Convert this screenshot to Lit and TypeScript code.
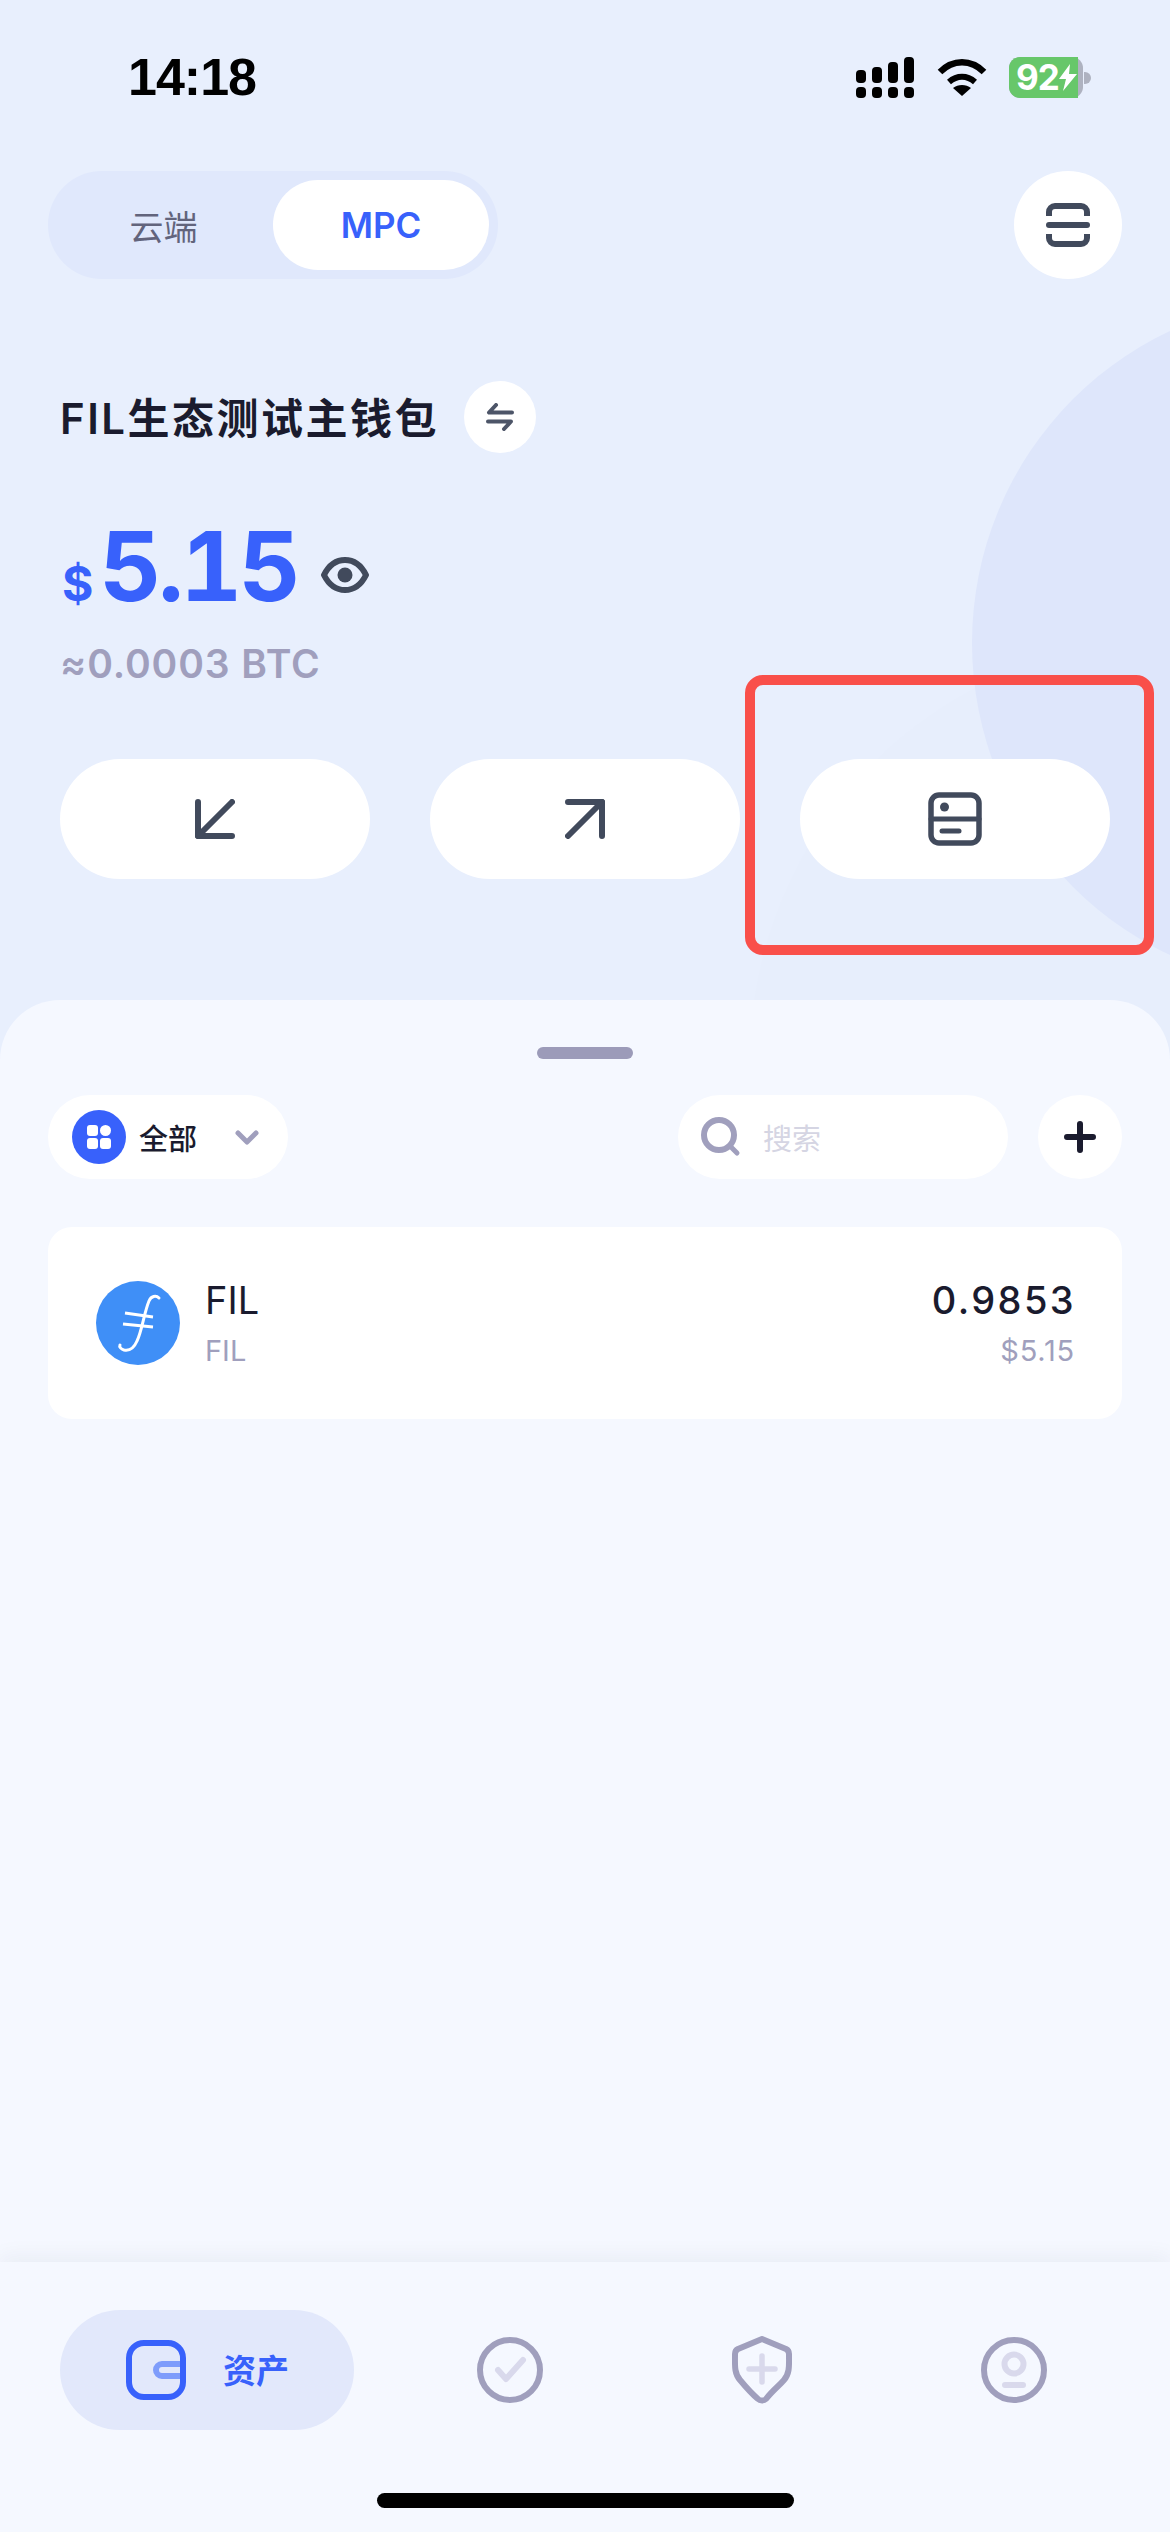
import { LitElement, html, css } from 'lit';
import { customElement } from 'lit/decorators.js';

@customElement('app-root')
export class AppRoot extends LitElement {
  static styles = css`
    :host {
      display: block;
      width: 1170px;
      height: 2532px;
      font-family: 'Inter', 'Noto Sans CJK SC', sans-serif;
      color: #1a1b2e;
    }
    svg { display: block; fill: none; stroke-linecap: round; stroke-linejoin: round; }
    .page {
      position: relative;
      display: flex;
      flex-direction: column;
      height: 2532px;
      overflow: hidden;
      background: #e8effd;
    }
    .deco-big, .deco-soft {
      position: absolute;
      border-radius: 50%;
    }
    .deco-soft { left: 750px; top: 640px; width: 840px; height: 840px; background: #e7eefc; }
    .deco-big { left: 972px; top: 298px; width: 690px; height: 690px; background: #dee6fb; }
    .deco-clip { position: absolute; inset: 0; overflow: hidden; }

    .status {
      position: relative;
      display: flex;
      justify-content: space-between;
      height: 171px;
      padding: 57px 79px 0 128px;
      box-sizing: border-box;
    }
    .time {
      font-family: 'Liberation Sans', sans-serif;
      font-weight: 700;
      font-size: 52px;
      line-height: 41px;
      letter-spacing: -1px;
      color: #000;
      height: 41px;
    }
    .sys { display: flex; align-items: flex-start; }
    .wifi { margin: 2px 22px 0 23px; }
    .battery {
      position: relative;
      width: 74px;
      height: 41px;
      border-radius: 11px;
      background: #aeb2c0;
    }
    .battery-fill {
      display: flex;
      align-items: center;
      height: 100%;
      padding-left: 7px;
      box-sizing: border-box;
      border-radius: 11px 0 0 11px;
      background: #67c76a;
      color: #fff;
      font-weight: 700;
      font-size: 35px;
      line-height: 41px;
      letter-spacing: -1px;
    }
    .battery-tip {
      width: 7px;
      height: 12px;
      margin: 15px 0 0 1px;
      border-radius: 0 6px 6px 0;
      background: #aeb2c0;
    }

    .top {
      position: relative;
      display: flex;
      justify-content: space-between;
      padding: 0 48px;
    }
    .toggle {
      display: flex;
      align-items: center;
      width: 450px;
      height: 108px;
      padding: 0 9px 0 0;
      box-sizing: border-box;
      border-radius: 54px;
      background: #e0e8fc;
    }
    .toggle-off {
      width: 225px;
      padding-left: 6px;
      box-sizing: border-box;
      text-align: center;
      font-size: 34px;
      color: #62647c;
    }
    .toggle-on {
      width: 216px;
      height: 90px;
      border-radius: 45px;
      background: #fff;
      color: #3861fb;
      font-size: 35px;
      font-weight: 600;
      line-height: 90px;
      text-align: center;
    }
    .round {
      display: flex;
      align-items: center;
      justify-content: center;
      border-radius: 50%;
      background: #fff;
    }
    .scan { width: 108px; height: 108px; }

    .wallet {
      position: relative;
      display: flex;
      align-items: center;
      margin-top: 102px;
      padding-left: 60px;
      height: 72px;
    }
    .wallet-name {
      font-size: 42px;
      font-weight: 600;
      letter-spacing: 2.5px;
      line-height: 72px;
      position: relative;
      top: 2px;
    }
    .swap { width: 72px; height: 72px; margin-left: 25px; }

    .balance {
      position: relative;
      display: flex;
      align-items: center;
      margin-top: 74px;
      padding-left: 62px;
      height: 96px;
    }
    .amount {
      display: flex;
      align-items: baseline;
      color: #3861fb;
      font-weight: 700;
      font-variant-numeric: tabular-nums;
    }
    .cur { font-size: 48px; line-height: 96px; }
    .num { font-size: 96px; line-height: 96px; margin-left: 6px; letter-spacing: -3.5px; }
    .eye { margin: 0 0 0 24px; }
    .btc {
      position: relative;
      margin-top: 14px;
      padding-left: 60px;
      font-size: 39px;
      font-weight: 600;
      line-height: 54px;
      color: #a09fbd;
      letter-spacing: 0.9px;
    }

    .actions {
      position: relative;
      display: flex;
      gap: 60px;
      margin-top: 68px;
      padding: 0 60px;
    }
    .action {
      display: flex;
      align-items: center;
      justify-content: center;
      flex: 1;
      height: 120px;
      border-radius: 60px;
      background: #fff;
    }

    .mark {
      position: absolute;
      left: 745px;
      top: 675px;
      width: 409px;
      height: 280px;
      box-sizing: border-box;
      border: 10px solid #f94f4a;
      border-radius: 18px;
      z-index: 2;
    }

    .sheet {
      position: relative;
      display: flex;
      flex-direction: column;
      flex: 1;
      margin-top: 121px;
      border-radius: 60px 60px 0 0;
      background: #f5f8ff;
    }
    .grabber {
      align-self: center;
      width: 96px;
      height: 12px;
      margin-top: 47px;
      border-radius: 6px;
      background: #9c9bb9;
    }
    .filters {
      display: flex;
      align-items: center;
      margin-top: 36px;
      padding: 0 48px;
    }
    .pill {
      display: flex;
      align-items: center;
      height: 84px;
      border-radius: 42px;
      background: #fff;
    }
    .pill-all { width: 240px; padding-left: 24px; box-sizing: border-box; }
    .pill-all span { margin-left: 13px; font-size: 29px; font-weight: 500; width: 58px; }
    .chev { margin-left: 38px; }
    .pill-search { width: 330px; margin-left: auto; padding-left: 23px; box-sizing: border-box; }
    .pill-search span { margin-left: 22px; font-size: 29px; color: #d5d5e3; }
    .plus { width: 84px; height: 84px; margin-left: 30px; }

    .card {
      display: flex;
      align-items: center;
      height: 192px;
      margin: 48px 48px 0;
      padding: 0 48px;
      border-radius: 24px;
      background: #fff;
    }
    .coin { width: 84px; height: 84px; border-radius: 50%; background: #3f8ff7; flex: none; }
    .coin-text { margin-left: 25px; }
    .coin-values { margin-left: auto; text-align: right; }
    .main { font-size: 38px; line-height: 46px; }
    .main.val { font-weight: 500; letter-spacing: 2.4px; margin-right: -2px; }
    .sub { margin-top: 10px; font-size: 29px; line-height: 36px; color: #a09fbd; }
    .coin-values .sub { letter-spacing: 0.8px; margin-right: -1px; }

    .tabs {
      display: flex;
      align-items: flex-start;
      height: 270px;
      margin-top: auto;
      padding: 48px 0 0 60px;
      box-sizing: border-box;
      background: #f5f8ff;
      box-shadow: 0 -6px 20px rgba(20, 30, 60, 0.05);
    }
    .tab-on {
      display: flex;
      align-items: center;
      width: 294px;
      height: 120px;
      margin-right: 30px;
      padding-left: 66px;
      box-sizing: border-box;
      border-radius: 60px;
      background: #e2e8fb;
    }
    .tab-on span {
      margin-left: 37px;
      font-size: 33px;
      font-weight: 600;
      color: #3861fb;
      position: relative;
      top: -1px;
    }
    .tab {
      display: flex;
      align-items: center;
      justify-content: center;
      width: 252px;
      height: 120px;
    }
    .home {
      position: absolute;
      left: 377px;
      top: 1493px;
      width: 417px;
      height: 15px;
      border-radius: 8px;
      background: #000;
    }
  `;

  render() {
    return html`
      <div class="page">
        <div class="deco-clip">
          <div class="deco-soft"></div>
          <div class="deco-big"></div>
        </div>

        <div class="status">
          <div class="time">14:18</div>
          <div class="sys">
            <svg width="58" height="41" viewBox="0 0 58 41" style="fill:#000">
              <rect x="0" y="13" width="10" height="13" rx="4"></rect>
              <rect x="16" y="10" width="10" height="16" rx="4"></rect>
              <rect x="32" y="5" width="10" height="21" rx="4"></rect>
              <rect x="48" y="0" width="10" height="26" rx="4"></rect>
              <rect x="0" y="30" width="10" height="11" rx="4"></rect>
              <rect x="16" y="30" width="10" height="11" rx="4"></rect>
              <rect x="32" y="30" width="10" height="11" rx="4"></rect>
              <rect x="48" y="30" width="10" height="11" rx="4"></rect>
            </svg>
            <svg class="wifi" width="50" height="37" viewBox="0 0 50 37">
              <path d="M3 13C16 0 34 0 47 13" stroke="#000" stroke-width="6.5" stroke-linecap="butt"></path>
              <path d="M12 23C20 16 30 16 38 23" stroke="#000" stroke-width="6" stroke-linecap="butt"></path>
              <path d="M25 37L16 29C21 25 29 25 34 29Z" fill="#000"></path>
            </svg>
            <div class="battery">
              <div class="battery-fill" style="width:${92 * 0.75}px">
                92<svg width="18" height="27" viewBox="0 0 18 27" style="fill:#fff;flex:none">
                  <path d="M11 0L0 15H7L4 27L18 10H10Z"></path>
                </svg>
              </div>
            </div>
            <div class="battery-tip"></div>
          </div>
        </div>

        <div class="top">
          <div class="toggle">
            <div class="toggle-off">云端</div>
            <div class="toggle-on">MPC</div>
          </div>
          <div class="round scan">
            <svg width="44" height="44" viewBox="0 0 44 44" stroke="#414a5c" stroke-width="6">
              <path d="M3 13V9a6 6 0 0 1 6-6H35a6 6 0 0 1 6 6V13" stroke-linecap="butt"></path>
              <path d="M3 22H41"></path>
              <path d="M3 31V35a6 6 0 0 0 6 6H35a6 6 0 0 0 6-6V31" stroke-linecap="butt"></path>
            </svg>
          </div>
        </div>

        <div class="wallet">
          <div class="wallet-name">FIL生态测试主钱包</div>
          <div class="round swap">
            <svg width="28" height="28" viewBox="0 0 28 28" stroke="#4d5568" stroke-width="4">
              <path d="M10 2L3 9.5H26"></path>
              <path d="M2 18.5H25L18 26"></path>
            </svg>
          </div>
        </div>

        <div class="balance">
          <div class="amount">
            <span class="cur">$</span>
            <span class="num">5.15</span>
          </div>
          <svg class="eye" width="48" height="36" viewBox="0 0 48 36">
            <path d="M3 18C8 8 15 3 24 3S40 8 45 18C40 28 33 33 24 33S8 28 3 18Z" stroke="#414a5c" stroke-width="6"></path>
            <circle cx="24" cy="18" r="7.5" fill="#414a5c"></circle>
          </svg>
        </div>
        <div class="btc">≈0.0003 BTC</div>

        <div class="actions">
          <div class="action">
            <svg width="40" height="40" viewBox="0 0 40 40" stroke="#414a5c" stroke-width="6">
              <path d="M3 3V37H37"></path>
              <path d="M3 37L37 3"></path>
            </svg>
          </div>
          <div class="action">
            <svg width="40" height="40" viewBox="0 0 40 40" stroke="#414a5c" stroke-width="6">
              <path d="M3 3H37V37"></path>
              <path d="M3 37L37 3"></path>
            </svg>
          </div>
          <div class="action">
            <svg width="54" height="54" viewBox="0 0 54 54" stroke="#414a5c" stroke-width="5.5">
              <rect x="3" y="3" width="48" height="48" rx="8"></rect>
              <path d="M3 27H51" stroke-width="5"></path>
              <circle cx="16.5" cy="15" r="4.5" fill="#414a5c" stroke="none"></circle>
              <path d="M14 39H31" stroke-width="5"></path>
            </svg>
          </div>
        </div>

        <div class="mark"></div>

        <div class="sheet">
          <div class="grabber"></div>
          <div class="filters">
            <div class="pill pill-all">
              <svg width="54" height="54" viewBox="0 0 54 54" style="flex:none">
                <circle cx="27" cy="27" r="27" fill="#3861fb"></circle>
                <rect x="15" y="15" width="11" height="11" rx="3" fill="#fff"></rect>
                <circle cx="33.5" cy="20.5" r="5.5" fill="#fff"></circle>
                <rect x="15" y="28" width="11" height="11" rx="3" fill="#fff"></rect>
                <rect x="28" y="28" width="11" height="11" rx="3" fill="#fff"></rect>
              </svg>
              <span>全部</span>
              <svg class="chev" width="24" height="15" viewBox="0 0 24 15" stroke="#a09fbd" stroke-width="5">
                <path d="M3 3L12 12L21 3"></path>
              </svg>
            </div>
            <div class="pill pill-search">
              <svg width="40" height="40" viewBox="0 0 40 40" stroke="#a09fbd" style="flex:none">
                <circle cx="18" cy="18" r="15" stroke-width="6"></circle>
                <path d="M31 31L36 36" stroke-width="5"></path>
              </svg>
              <span>搜索</span>
            </div>
            <div class="round plus">
              <svg width="32" height="32" viewBox="0 0 32 32" stroke="#1a1b2e" stroke-width="6">
                <path d="M16 3V29M3 16H29"></path>
              </svg>
            </div>
          </div>

          <div class="card">
            <div class="coin">
              <svg width="84" height="84" viewBox="0 0 84 84" stroke="#fff">
                <path d="M63 17C60 14 55 15 53 20C48 32 46 50 41 60C38 67 33 70 28 69C25 68 23 66 24 64" stroke-width="3"></path>
                <path d="M29 32L57 36M27 43L57 46" stroke-width="3" stroke-linecap="butt"></path>
              </svg>
            </div>
            <div class="coin-text">
              <div class="main">FIL</div>
              <div class="sub">FIL</div>
            </div>
            <div class="coin-values">
              <div class="main val">0.9853</div>
              <div class="sub">$5.15</div>
            </div>
          </div>

          <div class="tabs">
            <div class="tab-on">
              <svg width="60" height="60" viewBox="0 0 60 60" style="flex:none">
                <path d="M54 24H36A6 6 0 0 0 36 36H54" stroke="#7e9cfb" stroke-width="6"></path>
                <rect x="3" y="3" width="54" height="54" rx="15" stroke="#3861fb" stroke-width="6"></rect>
              </svg>
              <span>资产</span>
            </div>
            <div class="tab">
              <svg width="66" height="66" viewBox="0 0 66 66" stroke-width="6">
                <circle cx="33" cy="33" r="30" stroke="#a09fbd"></circle>
                <path d="M21 33L29 42L46 23" stroke="#d9d9ec"></path>
              </svg>
            </div>
            <div class="tab">
              <svg width="60" height="68" viewBox="0 0 60 68" stroke-width="6">
                <path d="M30 3L54 13C56 14 57 15 57 18C57 29 58 37 52 44C47 50 41 54 34 63C32 65 28 65 26 63C19 57 13 50 8 44C2 37 3 29 3 18C3 15 4 14 6 13Z" stroke="#a09fbd"></path>
                <path d="M30 20V46M17 33H43" stroke="#d9d9ec" stroke-width="5.5"></path>
              </svg>
            </div>
            <div class="tab">
              <svg width="66" height="66" viewBox="0 0 66 66" stroke-width="6">
                <circle cx="33" cy="33" r="30" stroke="#a09fbd"></circle>
                <circle cx="33" cy="27" r="9.5" stroke="#d9d9ec"></circle>
                <path d="M24 48H42" stroke="#d9d9ec"></path>
              </svg>
            </div>
          </div>

          <div class="home"></div>
        </div>
      </div>
    `;
  }
}
